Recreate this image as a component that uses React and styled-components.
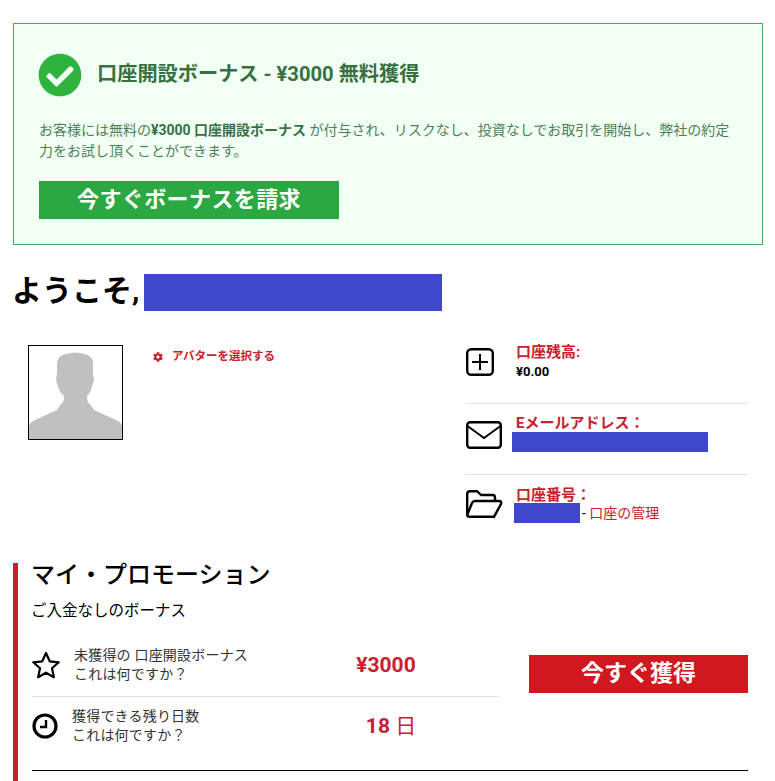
import React from "react";
import styled, { createGlobalStyle } from "styled-components";
import { FaCheckCircle, FaCog } from "react-icons/fa";

const Global = createGlobalStyle`
  html, body { margin: 0; padding: 0; background: #fff; overflow: hidden; }
  body { font-family: Roboto, "Noto Sans CJK JP", sans-serif; color: #000; }
  * { box-sizing: border-box; }
`;
const Page = styled.div`
  width: 775px; height: 781px; overflow: hidden; padding: 23px 12px 0 13px;
  display: flex; flex-direction: column;
`;
const Banner = styled.section`
  height: 222px; border: 1px solid #4fa95a; background: #f1fff5;
  padding: 29px 25px 0; display: flex; flex-direction: column;
`;
const BannerHead = styled.div`display: flex; align-items: center; gap: 15px; height: 43px;`;
const BannerIcon = styled(FaCheckCircle)`width: 44px; height: 44px; margin-left: -1px; color: #2eb33e; flex: none;`;
const BannerTitle = styled.h2`margin: 0; padding-bottom: 2px; font-size: 20.2px; line-height: 26px; font-weight: 700; color: #38703f;`;
const BannerText = styled.p`
  margin: 24px 0 0; width: 700px; font-size: 14px; line-height: 21px; color: #4d7f55;
  b { color: #38703f; font-weight: 700; }
`;
const ActionButton = styled.button`
  display: block; border: 0; border-radius: 0; color: #fff; font-family: inherit; font-weight: 700;
  font-size: ${p => p.$size}px; height: 38px; padding: 0; text-align: center; line-height: 36px;
  width: ${p => p.$width}px; background: ${p => p.$bg};
`;
const ClaimButton = styled(ActionButton)`margin-top: 19px; letter-spacing: .4px;`;
const Welcome = styled.div`display: flex; align-items: center; height: 37px; margin-top: 29px; gap: 5px;`;
const WelcomeText = styled.h1`margin: 0 0 0 -1px; padding-bottom: 4px; font-size: 30px; line-height: 37px; font-weight: 700;`;
const Redacted = styled.span`
  display: inline-block; background: #3f48cc; flex: none;
  width: ${p => p.$w}px; height: ${p => p.$h}px;
`;
const Profile = styled.div`
  display: grid; grid-template-columns: 438px 282px; padding-left: 15px; margin-top: 34px; height: 218px;
`;
const AvatarCol = styled.div`display: flex; align-items: flex-start; gap: 30px;`;
const AvatarFrame = styled.div`width: 95px; height: 95px; border: 1px solid #000; flex: none; display: flex; overflow: hidden;`;
const AvatarLink = styled.a`
  display: flex; align-items: center; gap: 9px; margin-top: 3px;
  font-size: 11.5px; line-height: 17px; font-weight: 700; color: #c8202c;
`;
const GearIcon = styled(FaCog)`width: 10px; height: 10px;`;
const Details = styled.div`display: flex; flex-direction: column; margin-top: -1px;`;
const DetailRow = styled.div`
  display: flex; align-items: flex-start; height: ${p => p.$h}px; padding-top: ${p => p.$top}px;
  & + & { border-top: 1px solid #e2e2e2; }
`;
const DetailIcon = styled.div`width: 50px; flex: none; display: flex; padding-top: ${p => p.$top || 0}px;`;
const DetailBody = styled.div`display: flex; flex-direction: column; font-size: 13px; line-height: 17px;`;
const DetailLabel = styled.span`font-size: 15px; line-height: 17px; font-weight: 700; color: #c8202c;`;
const Balance = styled.span`font-weight: 700; font-size: 13px; line-height: 17px; margin-top: 2px;`;
const ShiftedLine = styled.div`
  display: flex; align-items: center; margin-left: ${p => p.$shift}px; margin-top: ${p => p.$gap}px; height: 20px;
`;
const ManageLink = styled.a`color: #c8202c; font-size: 14px; margin-left: 2px; white-space: pre;`;
const Dash = styled.span`color: #000;`;
const Promo = styled.section`
  border-left: 5px solid #c8202c; padding: 0 0 0 14px; flex: 1;
  display: flex; flex-direction: column;
`;
const PromoTitle = styled.h2`margin: 0 0 0 -1px; font-size: 24px; line-height: 25px; font-weight: 500;`;
const PromoSub = styled.div`margin: 11px 0 0 -1px; font-size: 15.5px; line-height: 24px;`;
const PromoBody = styled.div`
  display: grid; grid-template-columns: 467px 219px; column-gap: 30px; margin-top: 14px;
  height: 134px; border-bottom: 1px solid #000; width: 716px;
`;
const Stats = styled.div`display: flex; flex-direction: column;`;
const StatRow = styled.div`
  height: ${p => p.$h}px; padding-bottom: ${p => p.$pb || 0}px; display: flex; align-items: center;
  & + & { border-top: 1px solid #e2e2e2; }
`;
const StatIcon = styled.div`width: ${p => p.$w}px; flex: none; display: flex;`;
const StatText = styled.div`
  width: ${p => p.$w}px; flex: none; font-size: 14px; line-height: 19px; color: #333; letter-spacing: .2px;
`;
const StatValue = styled.div`
  flex: none; font-size: 21px; font-weight: 700; color: #c8202c; width: 100px; text-align: center;
  padding-bottom: ${p => p.$pb || 0}px;
  span { font-weight: 400; }
`;
const ClaimCol = styled.div`padding-top: 18px;`;

const avatarPath = "M0 93 L0 80 Q1 76 6 74 L28 64 L32 58 Q35 57 35 50 Q30 46 29 40 Q26 35 28 28 L28 17 Q29 9 37 8 Q47 5 55 8 Q64 10 64 17 L64 28 Q66 35 63 40 Q62 46 58 50 Q58 57 61 58 L65 64 L87 74 Q92 76 93 80 L93 93 Z";

export default function App() {
  return (
    <Page>
      <Global />
      <Banner>
        <BannerHead>
          <BannerIcon />
          <BannerTitle>口座開設ボーナス - ¥3000 無料獲得</BannerTitle>
        </BannerHead>
        <BannerText>
          お客様には無料の<b>¥3000 口座開設ボーナス</b> が付与され、リスクなし、投資なしでお取引を開始し、弊社の約定力をお試し頂くことができます。
        </BannerText>
        <ClaimButton $width={300} $bg="#2ca843" $size={22}>今すぐボーナスを請求</ClaimButton>
      </Banner>
      <Welcome>
        <WelcomeText>ようこそ,</WelcomeText>
        <Redacted $w={298} $h={37} />
      </Welcome>
      <Profile>
        <AvatarCol>
          <AvatarFrame>
            <svg width="93" height="93" viewBox="0 0 93 93"><path d={avatarPath} fill="#c0c0c0" /></svg>
          </AvatarFrame>
          <AvatarLink><GearIcon />アバターを選択する</AvatarLink>
        </AvatarCol>
        <Details>
          <DetailRow $h={59} $top={0}>
            <DetailIcon $top={4}>
              <svg width="28" height="28" viewBox="0 0 28 28" fill="none" stroke="#000" strokeWidth="2.4">
                <rect x="1.2" y="1.2" width="25.6" height="25.6" rx="4" />
                <path d="M14 6V22M6 14H22" strokeWidth="2" />
              </svg>
            </DetailIcon>
            <DetailBody>
              <DetailLabel>口座残高:</DetailLabel>
              <Balance>¥0.00</Balance>
            </DetailBody>
          </DetailRow>
          <DetailRow $h={71} $top={11}>
            <DetailIcon $top={6}>
              <svg width="36" height="28" viewBox="0 0 36 28" fill="none" stroke="#000" strokeWidth="2.4">
                <rect x="1.2" y="1.2" width="33.6" height="25.6" rx="3" />
                <path d="M1.5 5 L18 17 L34.5 5" strokeWidth="2" />
              </svg>
            </DetailIcon>
            <DetailBody>
              <DetailLabel>Eメールアドレス：</DetailLabel>
              <ShiftedLine $shift={-4} $gap={0}><Redacted $w={196} $h={20} /></ShiftedLine>
            </DetailBody>
          </DetailRow>
          <DetailRow $h={70} $top={12}>
            <DetailIcon $top={3}>
              <svg width="37" height="28" viewBox="0 0 37 28" fill="none" stroke="#000" strokeWidth="2.4" strokeLinejoin="round">
                <path d="M1.2 25 V4 Q1.2 1.2 4 1.2 H11 L15 5 H27 Q29 5 29 8 V10" />
                <path d="M1.2 25 Q1.2 26.8 4 26.8 H28 L35 14 Q36 11 33 11 H9 Q7 11 6 13 Z" />
              </svg>
            </DetailIcon>
            <DetailBody>
              <DetailLabel>口座番号：</DetailLabel>
              <ShiftedLine $shift={-2} $gap={-1}>
                <Redacted $w={66} $h={20} />
                <ManageLink><Dash>- </Dash>口座の管理</ManageLink>
              </ShiftedLine>
            </DetailBody>
          </DetailRow>
        </Details>
      </Profile>
      <Promo>
        <PromoTitle>マイ・プロモーション</PromoTitle>
        <PromoSub>ご入金なしのボーナス</PromoSub>
        <PromoBody>
          <Stats>
            <StatRow $h={59} $pb={4}>
              <StatIcon $w={42}>
                <svg width="28" height="28" viewBox="0 0 28 28" fill="none" stroke="#000" strokeWidth="2.2" strokeLinejoin="round">
                  <path d="M14 2 L17.7 10.3 L26.7 11.3 L20 17.3 L21.9 26.2 L14 21.7 L6.1 26.2 L8 17.3 L1.3 11.3 L10.3 10.3 Z" />
                </svg>
              </StatIcon>
              <StatText $w={262}>未獲得の 口座開設ボーナス<br />これは何ですか？</StatText>
              <StatValue>¥3000</StatValue>
            </StatRow>
            <StatRow $h={58}>
              <StatIcon $w={40}>
                <svg width="26" height="26" viewBox="0 0 26 26" fill="none" stroke="#000">
                  <circle cx="13" cy="13" r="11" strokeWidth="3.2" />
                  <path d="M14 7V14H8" strokeWidth="2.4" />
                </svg>
              </StatIcon>
              <StatText $w={269}>獲得できる残り日数<br />これは何ですか？</StatText>
              <StatValue $pb={3}>18 <span>日</span></StatValue>
            </StatRow>
          </Stats>
          <ClaimCol>
            <ActionButton $width={219} $bg="#d2181f" $size={23}>今すぐ獲得</ActionButton>
          </ClaimCol>
        </PromoBody>
      </Promo>
    </Page>
  );
}
